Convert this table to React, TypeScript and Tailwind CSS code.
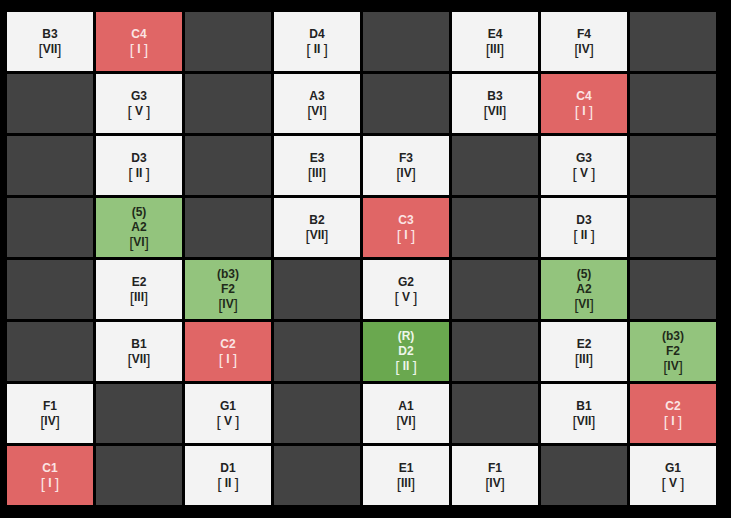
import React from 'react';

type Kind = 'light' | 'red' | 'green' | 'deep' | 'dark';

interface Cell {
  kind: Kind;
  note?: string;
  pitch?: string;
  degree?: string;
}

const D: Cell = { kind: 'dark' };
const L = (pitch: string, degree: string): Cell => ({ kind: 'light', pitch, degree });
const R = (pitch: string, degree: string): Cell => ({ kind: 'red', pitch, degree });
const G = (note: string, pitch: string, degree: string): Cell => ({ kind: 'green', note, pitch, degree });

// fretboard rows, top string first
const rows: Cell[][] = [
  [L('B3', 'VII'), R('C4', ' I '), D, L('D4', ' II '), D, L('E4', 'III'), L('F4', 'IV'), D],
  [D, L('G3', ' V '), D, L('A3', 'VI'), D, L('B3', 'VII'), R('C4', ' I '), D],
  [D, L('D3', ' II '), D, L('E3', 'III'), L('F3', 'IV'), D, L('G3', ' V '), D],
  [D, G('(5)', 'A2', 'VI'), D, L('B2', 'VII'), R('C3', ' I '), D, L('D3', ' II '), D],
  [D, L('E2', 'III'), G('(b3)', 'F2', 'IV'), D, L('G2', ' V '), D, G('(5)', 'A2', 'VI'), D],
  [D, L('B1', 'VII'), R('C2', ' I '), D, { kind: 'deep', note: '(R)', pitch: 'D2', degree: ' II ' }, D, L('E2', 'III'), G('(b3)', 'F2', 'IV')],
  [L('F1', 'IV'), D, L('G1', ' V '), D, L('A1', 'VI'), D, L('B1', 'VII'), R('C2', ' I ')],
  [R('C1', ' I '), D, L('D1', ' II '), D, L('E1', 'III'), L('F1', 'IV'), D, L('G1', ' V ')],
];

const kindClass: Record<Kind, string> = {
  light: 'bg-[#f3f3f3] text-[#222222]',
  red: 'bg-[#e06666] text-[#fbe4e4]',
  green: 'bg-[#93c47d] text-[#1f2a1a]',
  deep: 'bg-[#6aa84f] text-[#eef6ea]',
  dark: 'bg-[#434343]',
};

function NoteCell({ cell }: { cell: Cell }) {
  return (
    <div className={`flex flex-col items-center justify-center ${kindClass[cell.kind]}`}>
      {cell.note && <span>{cell.note}</span>}
      {cell.pitch && <span>{cell.pitch}</span>}
      {cell.degree && (
        <span className="whitespace-pre flex items-center h-[15px]">
          <span className="text-[15px] font-normal">[</span>
          {cell.degree}
          <span className="text-[15px] font-normal">]</span>
        </span>
      )}
    </div>
  );
}

export default function App() {
  return (
    <div className="w-[731px] h-[518px] bg-black pt-[12px] pl-[7px]">
      <div
        className="grid grid-cols-[repeat(8,86px)] grid-rows-[repeat(8,59px)] gap-[3px] text-[12px] leading-[15px] font-bold"
        style={{ fontFamily: '"Liberation Sans", Arial, sans-serif' }}
      >
        {rows.flatMap((row, r) => row.map((cell, c) => <NoteCell key={`${r}-${c}`} cell={cell} />))}
      </div>
    </div>
  );
}
